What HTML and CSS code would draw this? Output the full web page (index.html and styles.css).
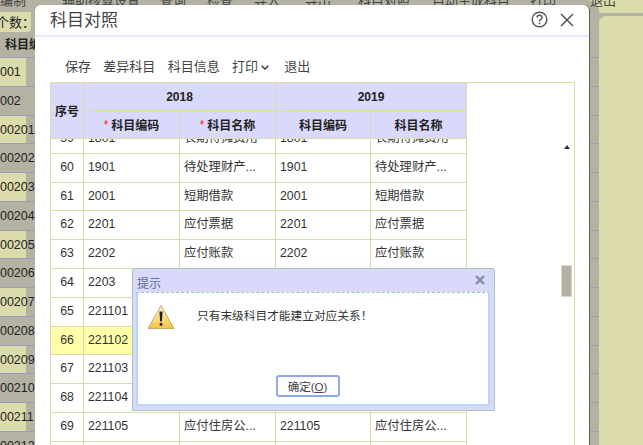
FILE: index.html
```html
<!DOCTYPE html>
<html lang="zh">
<head>
<meta charset="utf-8">
<title>科目对照</title>
<link rel="stylesheet" href="styles.css">
</head>
<body>
<div class="desk">
  <div class="left">
    <div class="menu">
      <span class="m1">编制</span><span class="m2">辅助核算设置</span><span class="m3">查询</span><span class="m4">检查</span><span class="m5">导入</span><span class="m6">导出</span><span class="m7">科目对照</span><span class="m8">自动生成科目</span><span class="m9">打印</span>
    </div>
    <div class="count"><span class="count-label">个数：</span></div>
    <div class="bghead">科目编码</div>
    <div class="bgrow y"><span>1001</span></div>
    <div class="bgrow"><span>1002</span></div>
    <div class="bgrow y"><span>100201</span></div>
    <div class="bgrow"><span>100202</span></div>
    <div class="bgrow y"><span>100203</span></div>
    <div class="bgrow"><span>100204</span></div>
    <div class="bgrow y"><span>100205</span></div>
    <div class="bgrow"><span>100206</span></div>
    <div class="bgrow y"><span>100207</span></div>
    <div class="bgrow"><span>100208</span></div>
    <div class="bgrow y"><span>100209</span></div>
    <div class="bgrow"><span>100210</span></div>
    <div class="bgrow y"><span>100211</span></div>
    <div class="bgrow"><span>100212</span></div>
  </div>
  <div class="right">
    <div class="right-top"><span>退出</span></div>
    <div class="right-panel"></div>
  </div>
</div>

<section class="modal">
  <header class="modal-head">
    <h1 class="modal-title">科目对照</h1>
    <div class="modal-tools">
      <svg class="ico-help" width="17" height="17" viewBox="0 0 17 17"><circle cx="8.5" cy="8.5" r="7.3" fill="none" stroke="#555" stroke-width="1.4"/><path d="M6 6.6c0-1.5 1.1-2.4 2.5-2.4s2.6.9 2.6 2.2c0 1.9-2.6 2-2.6 4" fill="none" stroke="#555" stroke-width="1.4"/><rect x="7.8" y="11.6" width="1.5" height="1.6" fill="#555"/></svg>
      <svg class="ico-close" width="14" height="14" viewBox="0 0 14 14"><path d="M1 1l12 12M13 1L1 13" stroke="#555" stroke-width="1.5" fill="none"/></svg>
    </div>
  </header>
  <nav class="toolbar">
    <span>保存</span><span>差异科目</span><span>科目信息</span>
    <span class="print">打印<svg width="8" height="5" viewBox="0 0 8 5"><path d="M.7.7L4 4l3.3-3.3" fill="none" stroke="#333" stroke-width="1.4"/></svg></span>
    <span class="last">退出</span>
  </nav>
  <div class="table-wrap">
    <div class="grid-area">
      <div class="thead">
        <div class="th seq">序号</div>
        <div class="th y1">2018</div>
        <div class="th y2">2019</div>
        <div class="th"><i>*</i> 科目编码</div>
        <div class="th"><i>*</i> 科目名称</div>
        <div class="th">科目编码</div>
        <div class="th">科目名称</div>
      </div>
      <div class="tbody">
        <div class="rows">
          <div class="row"><div>59</div><div>1801</div><div>长期待摊费用</div><div>1801</div><div>长期待摊费用</div></div>
          <div class="row"><div>60</div><div>1901</div><div>待处理财产...</div><div>1901</div><div>待处理财产...</div></div>
          <div class="row"><div>61</div><div>2001</div><div>短期借款</div><div>2001</div><div>短期借款</div></div>
          <div class="row"><div>62</div><div>2201</div><div>应付票据</div><div>2201</div><div>应付票据</div></div>
          <div class="row"><div>63</div><div>2202</div><div>应付账款</div><div>2202</div><div>应付账款</div></div>
          <div class="row"><div>64</div><div>2203</div><div>预收账款</div><div>2203</div><div>预收账款</div></div>
          <div class="row"><div>65</div><div>221101</div><div>应付职工...</div><div>221101</div><div>应付职工...</div></div>
          <div class="row hl"><div>66</div><div>221102</div><div>应付职工...</div><div>221102</div><div>应付职工...</div></div>
          <div class="row"><div>67</div><div>221103</div><div>应付职工...</div><div>221103</div><div>应付职工...</div></div>
          <div class="row"><div>68</div><div>221104</div><div>应付职工...</div><div>221104</div><div>应付职工...</div></div>
          <div class="row"><div>69</div><div>221105</div><div>应付住房公...</div><div>221105</div><div>应付住房公...</div></div>
          <div class="row"><div>70</div><div>221106</div><div>应付职工...</div><div>221106</div><div>应付职工...</div></div>
        </div>
      </div>
    </div>
    <div class="scroll">
      <div class="arrow"></div>
      <div class="thumb"></div>
    </div>
  </div>
</section>

<section class="dialog">
  <header class="dialog-head">
    <span class="dialog-title">提示</span>
    <svg width="10" height="10" viewBox="0 0 10 10"><path d="M1 1l8 8M9 1L1 9" stroke="#84919f" stroke-width="2.4" fill="none"/></svg>
  </header>
  <div class="dialog-body">
    <div class="msg">
      <svg width="28" height="26" viewBox="0 0 28 26">
        <defs><linearGradient id="wg" x1="0" y1="0" x2="0" y2="1"><stop offset="0" stop-color="#fff6cf"/><stop offset=".5" stop-color="#fbe08a"/><stop offset="1" stop-color="#f3c23e"/></linearGradient></defs>
        <path d="M14 1.5L27 24.5H1z" fill="url(#wg)" stroke="#c9a96a" stroke-width="1" stroke-linejoin="round"/>
        <path d="M12.4 7.5h3.2l-.7 10h-1.8z" fill="#222"/><rect x="12.6" y="19" width="2.8" height="2.8" rx="1" fill="#222"/>
      </svg>
      <p>只有末级科目才能建立对应关系！</p>
    </div>
    <div class="actions"><button class="ok" type="button">确定(<u>O</u>)</button></div>
  </div>
</section>
</body>
</html>
```
FILE: styles.css
```css
* { box-sizing: border-box; }
html, body { margin: 0; height: 100%; overflow: hidden; }
body {
  position: relative;
  background: #dcdbab;
  font: 12px "Liberation Sans", "Noto Sans CJK SC", sans-serif;
  color: #333;
}
.desk { display: flex; height: 445px; overflow: hidden; }
.left { width: 599px; background: #b3b2a3; flex: none; overflow: hidden; border-top-right-radius: 12px; }
.menu {
  display: flex; height: 12px; overflow: hidden;
  font-size: 13px; line-height: 14px; color: #444;
  white-space: nowrap;
}
.menu span { flex: none; display: block; margin-top: -6px; }
.m1 { width: 62px; }
.m2 { width: 98px; }
.m3 { width: 47px; }
.m4 { width: 47px; }
.m5 { width: 51px; }
.m6 { width: 53px; }
.m7 { width: 74px; }
.m8 { width: 98px; }
.m9 { width: 60px; }
.right { flex: 1; display: flex; flex-direction: column; min-width: 0; }
.right-top { height: 13px; flex: none; font-size: 13px; line-height: 14px; color: #444; white-space: nowrap; overflow: visible; }
.right-top span { display: block; margin: -6px 0 0 -9px; height: 14px; }
.right-panel { flex: 1; background: #b3b2a3; border-top: 3px solid #b3b2a3; }
.right-panel::before { content: ""; display: block; height: 100%; background: #dcdbab; border-top-left-radius: 7px; }
.count { padding-top: 2px; line-height: 18px; height: 20px; background: #dcdbab; width: 31px; border-radius: 0 0 4px 0; }
.count-label { display: block; font-size: 13px; color: #222; white-space: nowrap; text-indent: -4px; }
.bghead { height: 26px; font-weight: bold; line-height: 26px; padding-left: 5px; white-space: nowrap; color: #222; border-bottom: 1px solid #9d9db8; }
.bgrow { height: 28.75px; line-height: 28px; border-bottom: 1px solid #9d9db8; font-size: 12.5px; color: #222; overflow: hidden; white-space: nowrap; }
.bgrow span { display: block; width: 26px; height: 100%; text-indent: -7px; overflow: visible; }
.bgrow.y span { background: #dcdbab; }

.modal {
  position: absolute; left: 35px; top: 5px; width: 555px; height: 440px;
  background: #fff; border-right: 1px solid #5f5f50; border-radius: 6px 6px 0 0;
  display: flex; flex-direction: column;
}
.modal-head {
  height: 32px; flex: none; display: flex; align-items: center; justify-content: space-between;
  border-bottom: 2px solid #e8e8fc; padding: 0 15px 1px 15px;
}
.modal-title { margin: 3px 0 0; font-size: 17px; font-weight: normal; color: #444; line-height: 26px; }
.modal-tools { display: flex; align-items: center; gap: 12px; }
.toolbar {
  height: 45px; flex: none; display: flex; align-items: flex-end; gap: 12.3px;
  padding: 0 0 6px 30px; font-size: 13px; line-height: 18px; color: #444;
}
.print { display: flex; align-items: center; gap: 3px; }
.print svg { margin-top: 1px; }
.toolbar .last { margin-left: 3px; }
.table-wrap {
  flex: 1; min-height: 0; margin: 0 14px 0 15px; display: flex;
  border: solid #dcdca8; border-width: 1px 1px 0 1px; overflow: hidden;
}
.grid-area { width: 415px; flex: none; display: flex; flex-direction: column; min-height: 0; }
.thead {
  display: grid; grid-template-columns: 32px 96px 96px 95px 96px; grid-template-rows: 28px 28px;
  background: #d9d9fb; flex: none; font-weight: bold; color: #222; border-bottom: 1px solid #dcdca8; height: 56px;
}
.th { display: flex; align-items: center; justify-content: center; border-left: 1px solid #dcdca8; white-space: nowrap; font-size: 12px; padding-bottom: 1px; }
.th:first-child { border-left: 0; }
.th i { color: #f22; font-style: normal; font-weight: normal; margin-right: 3px; }
.seq { grid-row: span 2; }
.y1, .y2 { grid-column: span 2; border-bottom: 1px solid #dcdca8; padding-bottom: 0; }
.tbody { flex: 1; min-height: 0; overflow: hidden; }
.rows { margin-top: -14px; }
.row {
  display: grid; grid-template-columns: 32px 96px 96px 95px 96px; height: 28.8px;
  border-bottom: 1px solid #dcdca8; line-height: 27px; font-size: 12.3px; color: #333;
}
.row > div { border-left: 1px solid #dcdca8; padding-left: 4px; white-space: nowrap; overflow: hidden; }
.row > div:first-child { border-left: 0; padding-left: 0; text-align: center; }
.row.hl { background: #ffffaa; }
.scroll { flex: 1; border-left: 1px solid #dcdca8; display: flex; flex-direction: column; align-items: flex-end; padding-right: 2px; }
.arrow {
  margin: 62px 2px 0 0; width: 0; height: 0;
  border-left: 3px solid transparent; border-right: 3px solid transparent; border-bottom: 4px solid #333;
}
.thumb { margin-top: 116px; width: 11px; height: 32px; background: #b3b2a3; border: 1px solid #d8d8cf; }

.dialog {
  position: absolute; left: 132px; top: 268px; width: 363px; height: 143px;
  background: #d9d9fb; border: 1px solid #a9c5bc; border-radius: 3px 3px 0 0;
  padding: 0 4px 4px 3px; display: flex; flex-direction: column;
}
.dialog-head { height: 23px; flex: none; display: flex; justify-content: space-between; align-items: center; padding: 0 5px 0 1px; }
.dialog-title { font-size: 12px; color: #5d6d9c; padding: 3px 0 0 0; }
.dialog-head svg { margin-top: -2px; }
.dialog-body {
  flex: 1; background: #fff; border: 2px solid #bcd4f8; border-top: 1px dashed #9cc4ae;
  display: flex; flex-direction: column; justify-content: space-between; padding: 11px 0 7px 9px;
}
.msg { display: flex; gap: 22px; align-items: flex-start; }
.msg p { margin: 4px 0 0; font-size: 11.7px; line-height: 16px; color: #333; }
.actions { display: flex; justify-content: center; padding-right: 11px; }
.ok {
  width: 64px; height: 22px; padding: 0; background: #fff; border: 2px solid #8fa8ee; border-radius: 3px;
  font: 11.5px "Liberation Sans", "Noto Sans CJK SC", sans-serif; color: #444; margin-left: -9px;
}
```
